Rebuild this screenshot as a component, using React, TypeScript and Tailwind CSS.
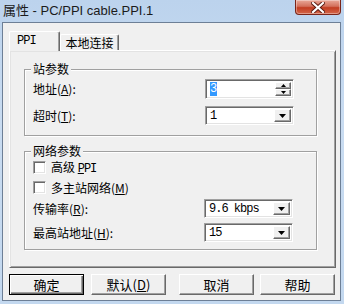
import type { ReactNode } from 'react'

const raised =
  'border border-t-white border-l-white border-r-[#696969] border-b-[#696969] shadow-[inset_-1px_-1px_0_#a0a0a0] bg-[#f0f0f0]'
const sunken =
  'border border-t-[#a0a0a0] border-l-[#a0a0a0] border-r-white border-b-white shadow-[inset_1px_1px_0_#696969,inset_-1px_-1px_0_#e3e3e3] bg-white'
const etched = 'border border-[#a0a0a0] shadow-[inset_1px_1px_0_#fff,1px_1px_0_#fff]'

function DownArrow({ size = 7 }: { size?: number }) {
  const h = Math.ceil(size / 2)
  return (
    <svg width={size} height={h} viewBox={`0 0 ${size} ${h}`}>
      <polygon points={`0,0 ${size},0 ${size / 2},${h}`} fill="#000" />
    </svg>
  )
}

function UpArrow() {
  return (
    <svg width="5" height="3" viewBox="0 0 5 3">
      <polygon points="0,3 5,3 2.5,0" fill="#000" />
    </svg>
  )
}

function Combo({ value }: { value: string }) {
  return (
    <div className={`${sunken} w-[89px] h-[19px] flex items-stretch p-[2px]`}>
      <div className="flex-1 flex items-center pl-[2px] font-['Liberation_Mono',monospace] text-[12px] tracking-[-1px] text-black">
        {value}
      </div>
      <div className={`${raised} w-[17px] flex items-center justify-center`}>
        <DownArrow />
      </div>
    </div>
  )
}

function Spin({ value }: { value: string }) {
  return (
    <div className={`${sunken} w-[89px] h-[20px] flex items-stretch p-[2px]`}>
      <div className="flex-1 flex items-center pl-[2px]">
        <span className="bg-[#3399ff] text-white font-['Liberation_Mono',monospace] text-[12px] leading-[14px]">
          {value}
        </span>
      </div>
      <div className="w-[16px] flex flex-col">
        <div className={`${raised} flex-1 flex items-center justify-center`}>
          <UpArrow />
        </div>
        <div className={`${raised} flex-1 flex items-center justify-center`}>
          <DownArrow size={5} />
        </div>
      </div>
    </div>
  )
}

function Label({ children }: { children: ReactNode }) {
  return <span className="text-[12px] leading-[14px] text-black">{children}</span>
}

function CheckRow({ children }: { children: ReactNode }) {
  return (
    <div className="flex items-center h-[13px] gap-[5px]">
      <div className={`${sunken} w-[13px] h-[13px]`} />
      <Label>{children}</Label>
    </div>
  )
}

function Group({ title, className, children }: { title: string; className: string; children: ReactNode }) {
  return (
    <div className={`relative ml-[14px] w-[293px] ${etched} ${className}`}>
      <span className="absolute -top-[8px] left-[6px] bg-[#f0f0f0] px-[2px] text-[12px] leading-[14px] text-black">
        {title}
      </span>
      {children}
    </div>
  )
}

function Btn({ children, def, className }: { children: ReactNode; def?: boolean; className?: string }) {
  return (
    <div
      className={`w-[75px] h-[21px] flex items-center justify-center text-[13px] text-black ${
        def
          ? 'border border-black bg-[#f0f0f0] shadow-[inset_1px_1px_0_#fff,inset_-1px_-1px_0_#696969,inset_-2px_-2px_0_#a0a0a0]'
          : raised
      } ${className ?? ''}`}
    >
      {children}
    </div>
  )
}

export default function App() {
  return (
    <div className="w-[344px] h-[304px] bg-[linear-gradient(180deg,#bcd3ed,#c9dcf1_40%,#c3d8ef)] flex flex-col font-['Noto_Sans_CJK_SC',sans-serif] overflow-hidden">
      {/* title bar */}
      <div className="h-[22px] flex items-start justify-between pl-[3px] pr-[3px]">
        <span className="mt-[2px] font-['Liberation_Sans','Noto_Sans_CJK_SC',sans-serif] text-[13px] leading-[17px] text-[#1b1b1b]">
          属性 - PC/PPI cable.PPI.1
        </span>
        <div className="w-[46px] h-[15px] rounded-b-[4px] border border-t-0 border-[#7a2418] bg-[linear-gradient(180deg,#e9a999,#d3705b_45%,#c23d21_55%,#d4664b)] flex items-center justify-center shadow-[inset_0_0_0_1px_rgba(255,255,255,0.35)]">
          <svg width="14" height="11" viewBox="0 0 14 11">
            <path d="M2 1 L12 10 M12 1 L2 10" stroke="#5a1a10" strokeWidth="4" strokeLinecap="square" />
            <path d="M2 1 L12 10 M12 1 L2 10" stroke="#fff" strokeWidth="2.2" strokeLinecap="square" />
          </svg>
        </div>
      </div>

      {/* client area */}
      <div className="ml-[2px] mr-[3px] h-[279px] border border-[#6d7f96] bg-[#f0f0f0] flex flex-col">
        {/* tabs */}
        <div className="pl-[6px] pt-[8px] h-[27px] flex items-end">
          <div className="relative z-10 -mb-[1px] w-[51px] h-[20px] border border-b-0 border-t-white border-l-white border-r-[#696969] shadow-[inset_-1px_0_0_#a0a0a0] rounded-t-[2px] bg-[#f0f0f0] pl-[7px] pt-[2px] flex items-start">
            <span className="font-['Liberation_Mono',monospace] text-[12px] leading-[14px] tracking-[-1px] text-black">PPI</span>
          </div>
          <div className="w-[59px] h-[16px] border border-b-0 border-t-white border-l-white border-r-[#696969] shadow-[inset_-1px_0_0_#a0a0a0] rounded-t-[2px] flex items-center justify-center">
            <span className="text-[12px] leading-[14px] text-black">本地连接</span>
          </div>
        </div>

        {/* panel */}
        <div className="ml-[6px] w-[327px] h-[218px] border border-t-white border-l-white border-r-[#696969] border-b-[#696969] shadow-[inset_1px_1px_0_#e3e3e3,inset_-1px_-1px_0_#a0a0a0] flex flex-col">
          <Group title="站参数" className="mt-[18px] h-[67px] pl-[8px] pr-[22px] pt-[9px] flex flex-col gap-[7px]">
            <div className="flex items-center justify-between">
              <Label>
                地址(<span className="underline">A</span>):
              </Label>
              <Spin value="3" />
            </div>
            <div className="flex items-center justify-between">
              <Label>
                超时(<span className="underline">T</span>):
              </Label>
              <Combo value="1" />
            </div>
          </Group>

          <Group title="网络参数" className="mt-[15px] h-[99px] pl-[8px] pr-[23px] pt-[9px] flex flex-col">
            <CheckRow>
              高级 <span className="font-['Liberation_Mono',monospace] tracking-[-1px]"><span className="underline">P</span>PI</span>
            </CheckRow>
            <div className="mt-[7px]">
              <CheckRow>
                多主站网络(<span className="underline">M</span>)
              </CheckRow>
            </div>
            <div className="mt-[5px] flex items-center justify-between">
              <Label>
                传输率(<span className="underline">R</span>):
              </Label>
              <Combo value="9.6 kbps" />
            </div>
            <div className="mt-[5px] flex items-center justify-between">
              <Label>
                最高站地址(<span className="underline">H</span>):
              </Label>
              <Combo value="15" />
            </div>
          </Group>
        </div>

        {/* buttons */}
        <div className="mt-[6px] ml-[6px] flex">
          <Btn def>确定</Btn>
          <Btn className="ml-[7px]">
            默认(<span className="underline">D</span>)
          </Btn>
          <Btn className="ml-[13px]">取消</Btn>
          <Btn className="ml-[6px]">帮助</Btn>
        </div>
      </div>
    </div>
  )
}
